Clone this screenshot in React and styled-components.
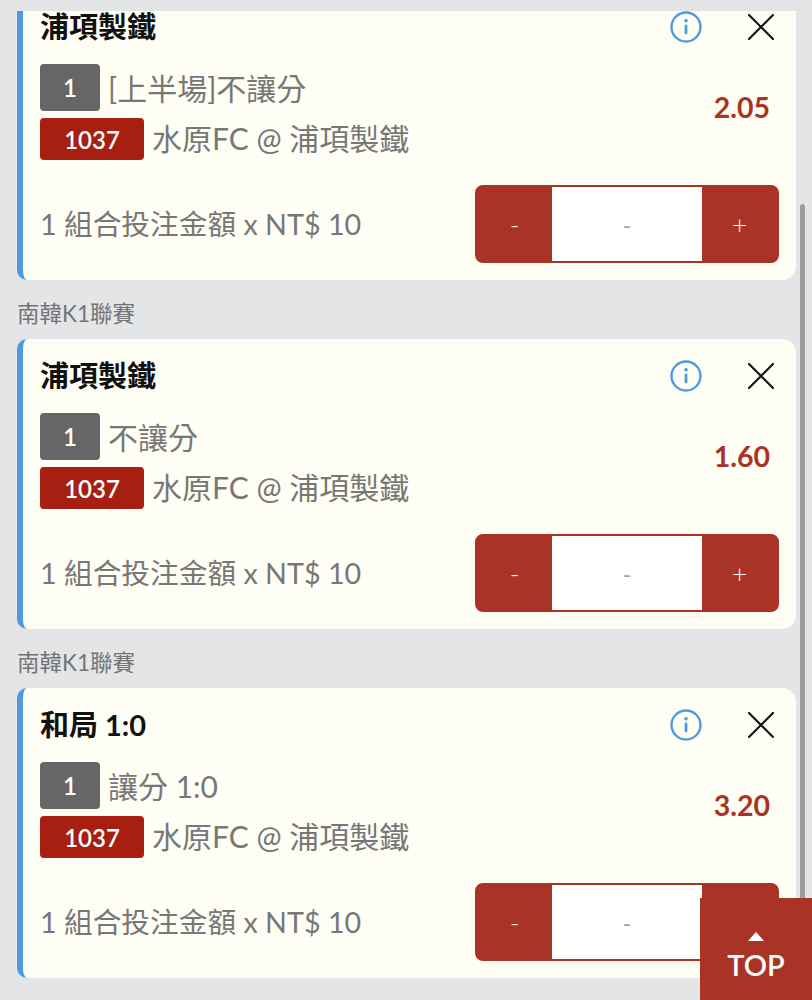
import styled, { createGlobalStyle } from "styled-components";

const bets = [
  { league: null, title: "浦項製鐵", pick: "[上半場]不讓分", odds: "2.05", clipped: true },
  { league: "南韓K1聯賽", title: "浦項製鐵", pick: "不讓分", odds: "1.60" },
  { league: "南韓K1聯賽", title: "和局 1:0", pick: "讓分 1:0", odds: "3.20" },
];

const GlobalStyle = createGlobalStyle`
  html, body {
    margin: 0;
    padding: 0;
    height: 100%;
    overflow: hidden;
    background: #e4e5e7;
  }
  * {
    box-sizing: border-box;
  }
`;

const Page = styled.div`
  position: relative;
  width: 812px;
  height: 1000px;
  padding: 11px 16px 0 17px;
  overflow: hidden;
  background: #e4e5e7;
  font-family: Lato, "Noto Sans CJK TC", sans-serif;
`;

const League = styled.div`
  height: 59px;
  padding-top: 22px;
  font-size: 22.5px;
  line-height: 24px;
  color: #737477;
`;

const Card = styled.section`
  position: relative;
  height: ${(p) => (p.$clipped ? "269px" : "290px")};
  padding: ${(p) => (p.$clipped ? "0" : "21px")} 17px 0 17px;
  background: #fffef5;
  border-left: 6px solid #4f9ade;
  border-radius: ${(p) => (p.$clipped ? "0 0 14px 10px" : "10px 14px 14px 10px")};
`;

const TitleRow = styled.div`
  display: flex;
  align-items: center;
  height: 32px;
  padding-right: 5px;
`;

const Title = styled.h3`
  flex: 1;
  margin: 0;
  font-size: 29px;
  font-weight: 700;
  line-height: 32px;
  color: #111;
`;

const IconButton = styled.span`
  display: flex;
  margin-left: ${(p) => p.$gap || 0}px;
`;

const Info = styled.div`
  display: flex;
  align-items: center;
  margin-top: 21px;
`;

const InfoText = styled.div`
  flex: 1;
  display: flex;
  flex-direction: column;
  gap: 7px;
`;

const Line = styled.div`
  display: flex;
  align-items: center;
  gap: 8px;
  height: ${(p) => p.$height}px;
  font-size: 30px;
  font-weight: 400;
  color: #777;
  white-space: nowrap;
`;

const LineText = styled.span`
  padding-bottom: ${(p) => p.$lift || 0}px;
`;

const Badge = styled.span`
  display: flex;
  align-items: center;
  justify-content: center;
  width: ${(p) => p.$width}px;
  height: 100%;
  border-radius: 4px;
  background: ${(p) => p.$color};
  color: #fff;
  font-size: 24px;
  font-weight: 600;
`;

const Odds = styled.div`
  margin: 0 9px 10px 0;
  font-size: 28.5px;
  font-weight: 700;
  color: #a93324;
`;

const StakeRow = styled.div`
  display: flex;
  align-items: center;
  justify-content: space-between;
  margin-top: 25px;
`;

const StakeLabel = styled.div`
  padding-bottom: 4px;
  font-size: 28.7px;
  font-weight: 400;
  color: #777;
  white-space: nowrap;
`;

const Stepper = styled.div`
  display: flex;
  width: 304px;
  height: 78px;
  border: 2px solid #a93324;
  border-radius: 8px;
  background: #a93324;
  overflow: hidden;
`;

const StepButton = styled.span`
  display: flex;
  align-items: center;
  justify-content: center;
  width: 75px;
  color: #fff;
  font-size: 26px;
  font-weight: 300;
`;

const StepValue = styled.span`
  flex: 1;
  display: flex;
  align-items: center;
  justify-content: center;
  background: #fff;
  color: #a5a5a5;
  font-size: 24px;
`;

const Scrollbar = styled.div`
  position: absolute;
  top: 204px;
  left: 800px;
  width: 5px;
  height: 694px;
  border-radius: 3px 3px 0 0;
  background: #9b9c9e;
`;

const TopButton = styled.div`
  position: absolute;
  right: 0;
  bottom: 0;
  width: 112px;
  height: 102px;
  display: flex;
  flex-direction: column;
  align-items: center;
  padding-top: 34px;
  background: #a93324;
  color: #fff;
  font-size: 29px;
  font-weight: 600;
  line-height: 36px;
`;

const Caret = styled.span`
  width: 0;
  height: 0;
  margin-bottom: 6px;
  border-left: 8px solid transparent;
  border-right: 8px solid transparent;
  border-bottom: 9px solid #fff;
`;

function InfoIcon() {
  return (
    <svg width="32" height="32" viewBox="0 0 32 32" fill="none">
      <circle cx="16" cy="16" r="14.5" stroke="#4f9ade" strokeWidth="2.4" />
      <circle cx="16" cy="9.8" r="1.8" fill="#4f9ade" />
      <rect x="14.6" y="13.5" width="2.8" height="10" rx="1.4" fill="#4f9ade" />
    </svg>
  );
}

function CloseIcon() {
  return (
    <svg width="26" height="26" viewBox="0 0 26 26" fill="none">
      <path d="M1 1 L25 25 M25 1 L1 25" stroke="#151515" strokeWidth="2.2" strokeLinecap="round" />
    </svg>
  );
}

function BetCard({ title, pick, odds, clipped }) {
  return (
    <Card $clipped={clipped}>
      <TitleRow>
        <Title>{title}</Title>
        <IconButton>
          <InfoIcon />
        </IconButton>
        <IconButton $gap={46}>
          <CloseIcon />
        </IconButton>
      </TitleRow>
      <Info>
        <InfoText>
          <Line $height={47}>
            <Badge $width={60} $color="#666666">1</Badge>
            <LineText $lift={2}>{pick}</LineText>
          </Line>
          <Line $height={42}>
            <Badge $width={104} $color="#a61f11">1037</Badge>
            <LineText $lift={4}>水原FC @ 浦項製鐵</LineText>
          </Line>
        </InfoText>
        <Odds>{odds}</Odds>
      </Info>
      <StakeRow>
        <StakeLabel>1 組合投注金額 x NT$ 10</StakeLabel>
        <Stepper>
          <StepButton>-</StepButton>
          <StepValue>-</StepValue>
          <StepButton>+</StepButton>
        </Stepper>
      </StakeRow>
    </Card>
  );
}

export default function App() {
  return (
    <>
      <GlobalStyle />
      <Page>
        {bets.map((bet, i) => (
          <div key={i}>
            {bet.league && <League>{bet.league}</League>}
            <BetCard {...bet} />
          </div>
        ))}
        <Scrollbar />
        <TopButton>
          <Caret />
          TOP
        </TopButton>
      </Page>
    </>
  );
}
